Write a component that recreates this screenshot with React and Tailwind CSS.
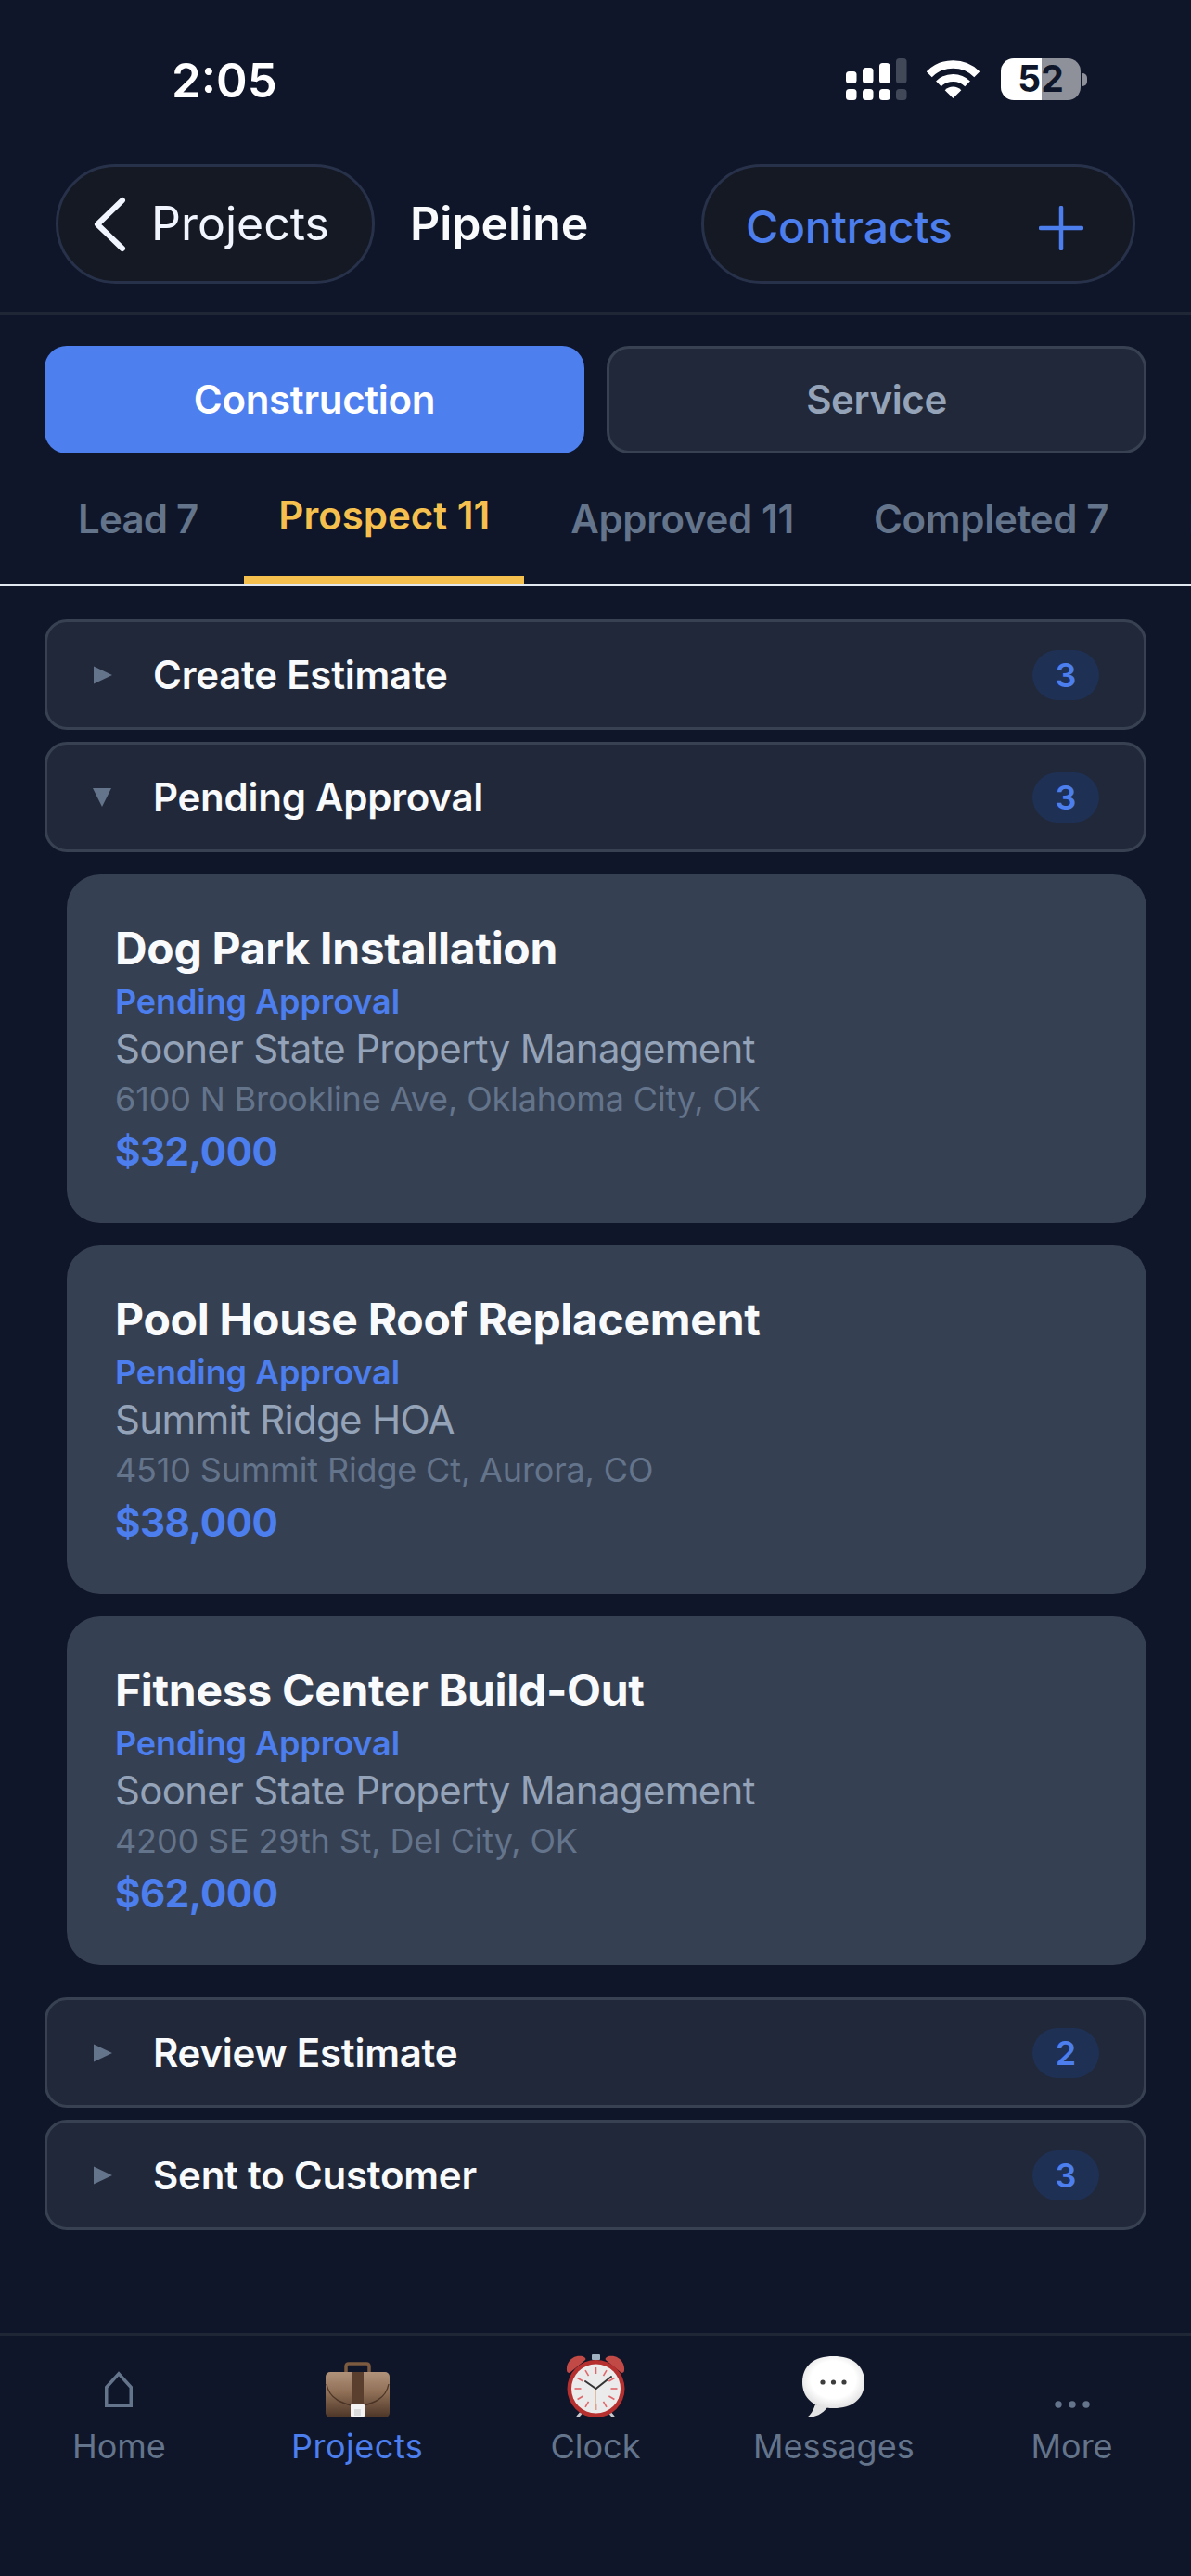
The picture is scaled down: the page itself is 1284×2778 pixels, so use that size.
const tabs = [
  { label: 'Lead 7', tracking: 'tracking-[-0.8px]' },
  { label: 'Prospect 11', active: true, tracking: 'tracking-[0px] px-[37px]' },
  { label: 'Approved 11', tracking: 'tracking-[-0.35px]' },
  { label: 'Completed 7', tracking: 'tracking-[-0.3px]' },
  { label: 'Lost 0', tracking: 'tracking-[0px]' },
];

const jobs = [
  { title: 'Dog Park Installation', client: 'Sooner State Property Management', address: '6100 N Brookline Ave, Oklahoma City, OK', price: '$32,000' },
  { title: 'Pool House Roof Replacement', client: 'Summit Ridge HOA', address: '4510 Summit Ridge Ct, Aurora, CO', price: '$38,000' },
  { title: 'Fitness Center Build-Out', client: 'Sooner State Property Management', address: '4200 SE 29th St, Del City, OK', price: '$62,000' },
];

function SignalIcon() {
  const bars = [
    { x: 0, top: 14, fill: '#ffffff' },
    { x: 18, top: 10, fill: '#ffffff' },
    { x: 36, top: 5, fill: '#ffffff' },
    { x: 54, top: 0, fill: '#414858' },
  ];
  return (
    <svg width="66" height="45" viewBox="0 0 66 45">
      {bars.map((b) => (
        <g key={b.x} fill={b.fill}>
          <rect x={b.x} y={b.top} width="11.5" height={27 - b.top} rx="3.5" />
          <rect x={b.x} y="33" width="11.5" height="12" rx="3.5" />
        </g>
      ))}
    </svg>
  );
}

function WifiIcon() {
  return (
    <svg width="57" height="41" viewBox="0 0 57 41" fill="none" stroke="#ffffff">
      <path d="M2.7 15.2A36.5 36.5 0 0 1 54.3 15.2" strokeWidth="8.5" />
      <path d="M12.9 25.4A22 22 0 0 1 44.1 25.4" strokeWidth="8" />
      <path d="M28.5 41L19.7 32.2A12.5 12.5 0 0 1 37.3 32.2Z" fill="#ffffff" stroke="none" />
    </svg>
  );
}

function Triangle({ open }) {
  return (
    <svg width="24" height="24" viewBox="0 0 24 24" className="shrink-0">
      <polygon points={open ? '2,2 22,2 12,22' : '3,2.5 23,12 3,21.5'} fill="#64748b" />
    </svg>
  );
}

function HomeIcon() {
  return (
    <svg width="30" height="39" viewBox="0 0 30 39" fill="none" stroke="#64748b" strokeWidth="3.5" className="mb-[11px]">
      <path d="M1.75 37.25V17.5L15 2.8 28.25 17.5V37.25Z" />
    </svg>
  );
}

function BriefcaseIcon() {
  return (
    <svg width="69" height="60" viewBox="0 0 69 60">
      <defs>
        <linearGradient id="caseBody" x1="0" y1="0" x2="0" y2="1">
          <stop offset="0" stopColor="#b0927a" />
          <stop offset="0.45" stopColor="#8f6f56" />
          <stop offset="1" stopColor="#4c3527" />
        </linearGradient>
      </defs>
      <path d="M22 12V5Q22 2 25 2H44Q47 2 47 5V12" fill="none" stroke="#7d5b40" strokeWidth="3.5" />
      <rect x="0" y="11" width="69" height="49" rx="5" fill="url(#caseBody)" />
      <path d="M1 24C4 41 20 45 28 47M41 47C49 45 65 41 68 24" fill="none" stroke="#3f2b1e" strokeWidth="1.4" opacity="0.8" />
      <rect x="29" y="11" width="12" height="34" fill="#5a3f2e" />
      <rect x="27" y="45" width="15" height="15" rx="2" fill="#f4f4f4" />
      <rect x="31" y="51" width="7" height="7" fill="#dcdcdc" />
    </svg>
  );
}

function AlarmIcon() {
  const ticks = [0, 30, 60, 90, 120, 150, 180, 210, 240, 270, 300, 330];
  return (
    <svg width="66" height="68" viewBox="0 0 66 68">
      <rect x="29" y="0" width="9" height="6" rx="1" fill="#9fb0c0" />
      <path d="M20 60L14 67M46 60L52 67" stroke="#c5c8cc" strokeWidth="3" strokeLinecap="round" />
      <path d="M2 17C1 8 9 0 19 2 22 3 23 5 22 6L5 20C3 20 2 19 2 17Z" fill="#c24a46" />
      <path d="M64 17C65 8 57 0 47 2 44 3 43 5 44 6L61 20C63 20 64 19 64 17Z" fill="#c24a46" />
      <ellipse cx="33.5" cy="37" rx="31" ry="31" fill="#b5302f" />
      <ellipse cx="33.5" cy="37" rx="26.5" ry="26.5" fill="#ebebeb" />
      <g stroke="#e0666a" strokeWidth="1.6">
        {ticks.map((a) => (
          <line key={a} x1="33.5" y1="14" x2="33.5" y2="21" transform={`rotate(${a} 33.5 37)`} />
        ))}
      </g>
      <line x1="33.5" y1="37" x2="33.5" y2="60" stroke="#d8b48c" strokeWidth="0.8" />
      <path d="M33.5 37L22 29" stroke="#333333" strokeWidth="2" strokeLinecap="round" />
      <path d="M33.5 37L50 24" stroke="#333333" strokeWidth="2" strokeLinecap="round" />
    </svg>
  );
}

function BubbleIcon() {
  return (
    <svg width="67" height="66" viewBox="0 0 67 66">
      <defs>
        <radialGradient id="bubbleFill" cx="0.5" cy="0.45" r="0.6">
          <stop offset="0.6" stopColor="#ffffff" />
          <stop offset="1" stopColor="#dcdcdc" />
        </radialGradient>
      </defs>
      <path d="M14 52C12 58 9 63 5 66 14 66 22 62 27 55Z" fill="#e4e4e4" />
      <path d="M33.5 0C54 0 67 10 67 28 67 46 54 56 33.5 56 13 56 0 46 0 28 0 10 13 0 33.5 0Z" fill="url(#bubbleFill)" />
      <circle cx="22" cy="28" r="2.6" fill="#3c3c3c" />
      <circle cx="33.5" cy="28" r="2.6" fill="#3c3c3c" />
      <circle cx="45" cy="28" r="2.6" fill="#3c3c3c" />
    </svg>
  );
}

function MoreIcon() {
  return (
    <svg width="38" height="8" viewBox="0 0 38 8" fill="#64748b" className="mb-[10px]">
      <circle cx="4" cy="4" r="3.7" />
      <circle cx="19" cy="4" r="3.7" />
      <circle cx="34" cy="4" r="3.7" />
    </svg>
  );
}

function SectionRow({ title, count, open }) {
  return (
    <div className="flex h-[119px] items-center rounded-[24px] border-[3px] border-[#374151] bg-[#212839] pl-[47px] pr-[48px]">
      <Triangle open={open} />
      <span className="ml-[43px] flex-1 text-[42px] font-semibold tracking-[-0.25px] text-[#f8fafc]">{title}</span>
      <span className="flex h-[54px] w-[72px] items-center justify-center rounded-full bg-[#1e3054] text-[36px] font-semibold text-[#4c7eee]">{count}</span>
    </div>
  );
}

function JobCard({ job }) {
  return (
    <div className="flex h-[376px] flex-col rounded-[36px] bg-[#364053] pl-[52px] pt-[51px]">
      <div className="text-[48px] font-bold leading-[58px] tracking-[-0.3px] text-[#f8fafc]">{job.title}</div>
      <div className="mt-[6px] text-[36px] font-semibold leading-[44px] tracking-[-0.1px] text-[#4c7eee]">Pending Approval</div>
      <div className="mt-[3px] text-[42px] leading-[52px] tracking-[-0.7px] text-[#94a3b8]">{job.client}</div>
      <div className="mt-[5px] text-[36px] leading-[46px] tracking-[-0.15px] text-[#64748b]">{job.address}</div>
      <div className="mt-[8px] text-[42px] font-bold leading-[52px] tracking-[-0.5px] text-[#4c7eee]">{job.price}</div>
    </div>
  );
}

function NavItem({ icon, label, active }) {
  return (
    <div className="flex flex-col items-center">
      <div className="flex h-[68px] items-end justify-center">{icon}</div>
      <span className={`mt-[10px] text-[36px] leading-[42px] ${active ? 'tracking-[0.5px] text-[#4c7eee]' : 'text-[#64748b]'}`}>{label}</span>
    </div>
  );
}

export default function App() {
  return (
    <div className="flex min-h-[2778px] flex-col bg-[#0f1629] font-['Inter',sans-serif]">
      {/* status bar */}
      <div className="flex h-[130px] items-start justify-between pl-[185px] pr-[112px] pt-[58px]">
        <span className="text-[51px] font-semibold leading-[58px] text-white">2:05</span>
        <div className="flex items-start pt-[5px]">
          <SignalIcon />
          <div className="ml-[21px] mt-[2px]"><WifiIcon /></div>
          <div className="ml-[23px] flex h-[45px] w-[86px] items-center justify-center rounded-[14px] bg-[linear-gradient(90deg,#ffffff_51%,#8e9199_51%)] text-[39px] font-bold text-[#0f1629]">52</div>
          <div className="ml-[2px] mt-[16px] h-[14px] w-[5px] rounded-r-full bg-[#8e9199]" />
        </div>
      </div>

      {/* header */}
      <div className="flex items-center border-b-[3px] border-[#1f2736] pb-[31px] pl-[60px] pr-[60px] pt-[47px]">
        <div className="flex h-[129px] w-[344px] items-center rounded-full border-[3px] border-[#273149] bg-[#151924] pl-[37px]">
          <svg width="36" height="60" viewBox="0 0 36 60" fill="none" stroke="#f1f5fd" strokeWidth="6" strokeLinecap="round" strokeLinejoin="round">
            <path d="M32 4L5 30 32 56" />
          </svg>
          <span className="ml-[27px] text-[50px] text-[#f1f5fd]">Projects</span>
        </div>
        <span className="ml-[38px] text-[50px] font-semibold text-[#f8fafc]">Pipeline</span>
        <div className="ml-auto flex h-[129px] w-[468px] items-center rounded-full border-[3px] border-[#273149] bg-[#151924] pl-[45px]">
          <span className="mt-[6px] text-[48px] font-medium tracking-[-0.2px] text-[#4c7eee]">Contracts</span>
          <svg width="48" height="48" viewBox="0 0 48 48" fill="none" stroke="#4c7eee" strokeWidth="4.5" strokeLinecap="round" className="ml-auto mr-[53px] mt-[8px]">
            <path d="M24 2V46M2 24H46" />
          </svg>
        </div>
      </div>

      {/* construction / service */}
      <div className="grid grid-cols-2 gap-[24px] px-[48px] pt-[33px]">
        <div className="flex h-[116px] items-center justify-center rounded-[24px] bg-[#4d7fef] pb-[2px] text-[42px] font-semibold tracking-[-0.3px] text-white">Construction</div>
        <div className="flex h-[116px] items-center justify-center rounded-[24px] border-[3px] border-[#374151] bg-[#212839] pb-[2px] text-[42px] font-semibold tracking-[-0.4px] text-[#94a3b8]">Service</div>
      </div>

      {/* stage tabs */}
      <div className="flex h-[143px] gap-[14px] overflow-hidden border-b-2 border-[#e2e8f0] pl-[48px]">
        {tabs.map((t) => (
          <div
            key={t.label}
            className={`flex shrink-0 items-center whitespace-nowrap px-[36px] text-[42px] font-semibold ${t.tracking} ${t.active ? 'border-b-[9px] border-[#f5c04d] text-[#f5c04d]' : 'text-[#64748b]'}`}
          >
            {t.label}
          </div>
        ))}
      </div>

      {/* pipeline list */}
      <div className="flex flex-1 flex-col px-[48px] pt-[36px]">
        <div className="flex flex-col gap-[13px]">
          <SectionRow title="Create Estimate" count={3} />
          <SectionRow title="Pending Approval" count={3} open />
        </div>
        <div className="ml-[24px] mt-[24px] flex flex-col gap-[24px]">
          {jobs.map((job) => (
            <JobCard key={job.title} job={job} />
          ))}
        </div>
        <div className="mt-[35px] flex flex-col gap-[13px]">
          <SectionRow title="Review Estimate" count={2} />
          <SectionRow title="Sent to Customer" count={3} />
        </div>
      </div>

      {/* bottom nav */}
      <div className="grid h-[262px] grid-cols-5 border-t-[3px] border-[#1f2736] pt-[20px]">
        <NavItem icon={<HomeIcon />} label="Home" />
        <NavItem icon={<BriefcaseIcon />} label="Projects" active />
        <NavItem icon={<AlarmIcon />} label="Clock" />
        <NavItem icon={<BubbleIcon />} label="Messages" />
        <NavItem icon={<MoreIcon />} label="More" />
      </div>
    </div>
  );
}
